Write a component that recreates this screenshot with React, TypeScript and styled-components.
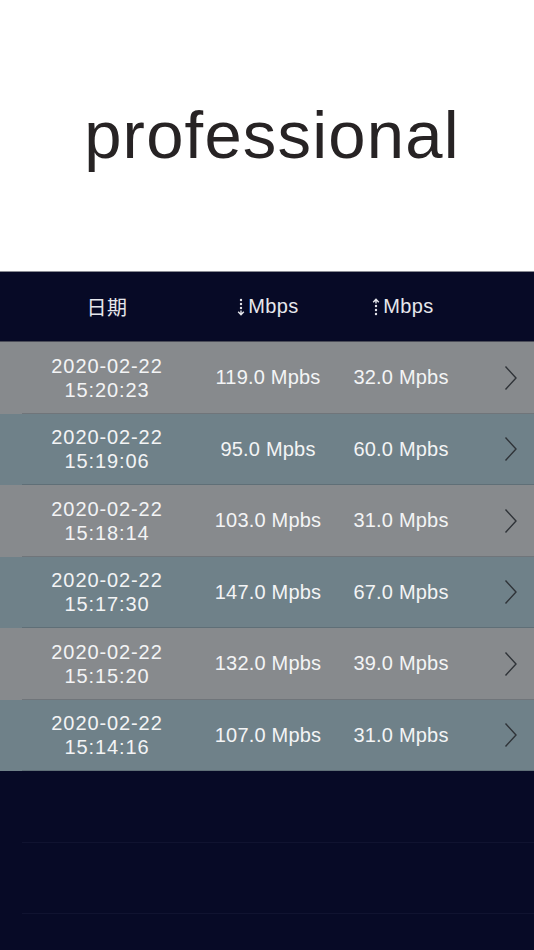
import React from "react";
import styled, { createGlobalStyle } from "styled-components";

const GlobalStyle = createGlobalStyle`
  html, body {
    margin: 0;
    padding: 0;
    background: #070a26;
  }
  body {
    font-family: "Liberation Sans", Arial, "Noto Sans CJK SC", sans-serif;
  }
`;

const Page = styled.div`
  width: 534px;
  height: 950px;
  display: flex;
  flex-direction: column;
  background: #070a26;
  overflow: hidden;
`;

const Hero = styled.div`
  height: 272px;
  flex-shrink: 0;
  background: #ffffff;
  display: flex;
  align-items: center;
  justify-content: center;
  padding-left: 10px;
  box-sizing: border-box;
  border-bottom: 1px solid #8a8c94;
`;

const Title = styled.h1`
  margin: 0 0 2px 0;
  font-family: "Liberation Sans", Arial, sans-serif;
  font-weight: 400;
  font-size: 67px;
  letter-spacing: 1.2px;
  color: #272324;
`;

const HeaderBar = styled.div`
  height: 69px;
  flex-shrink: 0;
  background: #070a26;
  display: grid;
  grid-template-columns: 214px 108px 160px 52px;
  align-items: center;
  border-bottom: 1px solid #4a4c58;
`;

const HeadCell = styled.div<{ $shift?: number }>`
  display: flex;
  align-items: center;
  justify-content: center;
  gap: 3px;
  color: #e6e7ec;
  font-size: 20px;
  letter-spacing: 0.4px;
  font-family: "Liberation Sans", Arial, "Noto Sans CJK SC", sans-serif;
  transform: translateX(${(p) => p.$shift ?? 0}px);
`;

const Row = styled.div<{ $tone: "gray" | "teal" | "empty" }>`
  height: 71.5px;
  flex-shrink: 0;
  box-sizing: border-box;
  display: grid;
  grid-template-columns: 214px 108px 160px 52px;
  align-items: center;
  position: relative;
  background: ${(p) =>
    p.$tone === "gray" ? "#878a8d" : p.$tone === "teal" ? "#6f8189" : "#070a26"};
  &::after {
    content: "";
    position: absolute;
    left: 22px;
    right: 0;
    bottom: 0;
    height: 1px;
    background: ${(p) => (p.$tone === "empty" ? "#101330" : "rgba(60,70,80,0.3)")};
  }
`;

const DateCell = styled.div`
  color: #f3f4f5;
  font-size: 20px;
  line-height: 24px;
  text-align: center;
  letter-spacing: 0.9px;
`;

const SpeedCell = styled.div<{ $shift?: number }>`
  color: #f3f4f5;
  font-size: 20px;
  letter-spacing: 0.2px;
  text-align: center;
  white-space: nowrap;
  transform: translateX(${(p) => p.$shift ?? 0}px);
`;

const ChevronCell = styled.div`
  display: flex;
  align-items: center;
  justify-content: flex-end;
  padding-right: 16px;
`;

const DownArrow = () => (
  <svg width="8" height="18" viewBox="0 0 8 18">
    <circle cx="4" cy="2" r="1.2" fill="#e6e7ec" />
    <circle cx="4" cy="6" r="1.2" fill="#e6e7ec" />
    <circle cx="4" cy="10" r="1.2" fill="#e6e7ec" />
    <path d="M4 12.5 L4 16.5 M1.2 13.8 L4 16.8 L6.8 13.8" stroke="#e6e7ec" strokeWidth="1.4" fill="none" />
  </svg>
);

const UpArrow = () => (
  <svg width="8" height="18" viewBox="0 0 8 18">
    <path d="M4 5.5 L4 1.5 M1.2 4.2 L4 1.2 L6.8 4.2" stroke="#e6e7ec" strokeWidth="1.4" fill="none" />
    <circle cx="4" cy="8" r="1.2" fill="#e6e7ec" />
    <circle cx="4" cy="12" r="1.2" fill="#e6e7ec" />
    <circle cx="4" cy="16" r="1.2" fill="#e6e7ec" />
  </svg>
);

const Chevron = () => (
  <svg width="14" height="26" viewBox="0 0 14 26">
    <path d="M1.5 1.5 L12 13 L1.5 24.5" stroke="#2f3338" strokeWidth="1.4" fill="none" />
  </svg>
);

const records = [
  { date: "2020-02-22", time: "15:20:23", down: "119.0", up: "32.0" },
  { date: "2020-02-22", time: "15:19:06", down: "95.0", up: "60.0" },
  { date: "2020-02-22", time: "15:18:14", down: "103.0", up: "31.0" },
  { date: "2020-02-22", time: "15:17:30", down: "147.0", up: "67.0" },
  { date: "2020-02-22", time: "15:15:20", down: "132.0", up: "39.0" },
  { date: "2020-02-22", time: "15:14:16", down: "107.0", up: "31.0" },
];

export default function App() {
  return (
    <>
      <GlobalStyle />
      <Page>
        <Hero>
          <Title>professional</Title>
        </Hero>
        <HeaderBar>
          <HeadCell>日期</HeadCell>
          <HeadCell $shift={0}>
            <DownArrow />
            Mbps
          </HeadCell>
          <HeadCell $shift={1}>
            <UpArrow />
            Mbps
          </HeadCell>
          <div />
        </HeaderBar>
        {records.map((r, i) => (
          <Row key={i} $tone={i % 2 === 0 ? "gray" : "teal"}>
            <DateCell>
              {r.date}
              <br />
              {r.time}
            </DateCell>
            <SpeedCell $shift={0}>{r.down} Mpbs</SpeedCell>
            <SpeedCell $shift={-1}>{r.up} Mpbs</SpeedCell>
            <ChevronCell>
              <Chevron />
            </ChevronCell>
          </Row>
        ))}
        <Row $tone="empty" />
        <Row $tone="empty" />
      </Page>
    </>
  );
}
